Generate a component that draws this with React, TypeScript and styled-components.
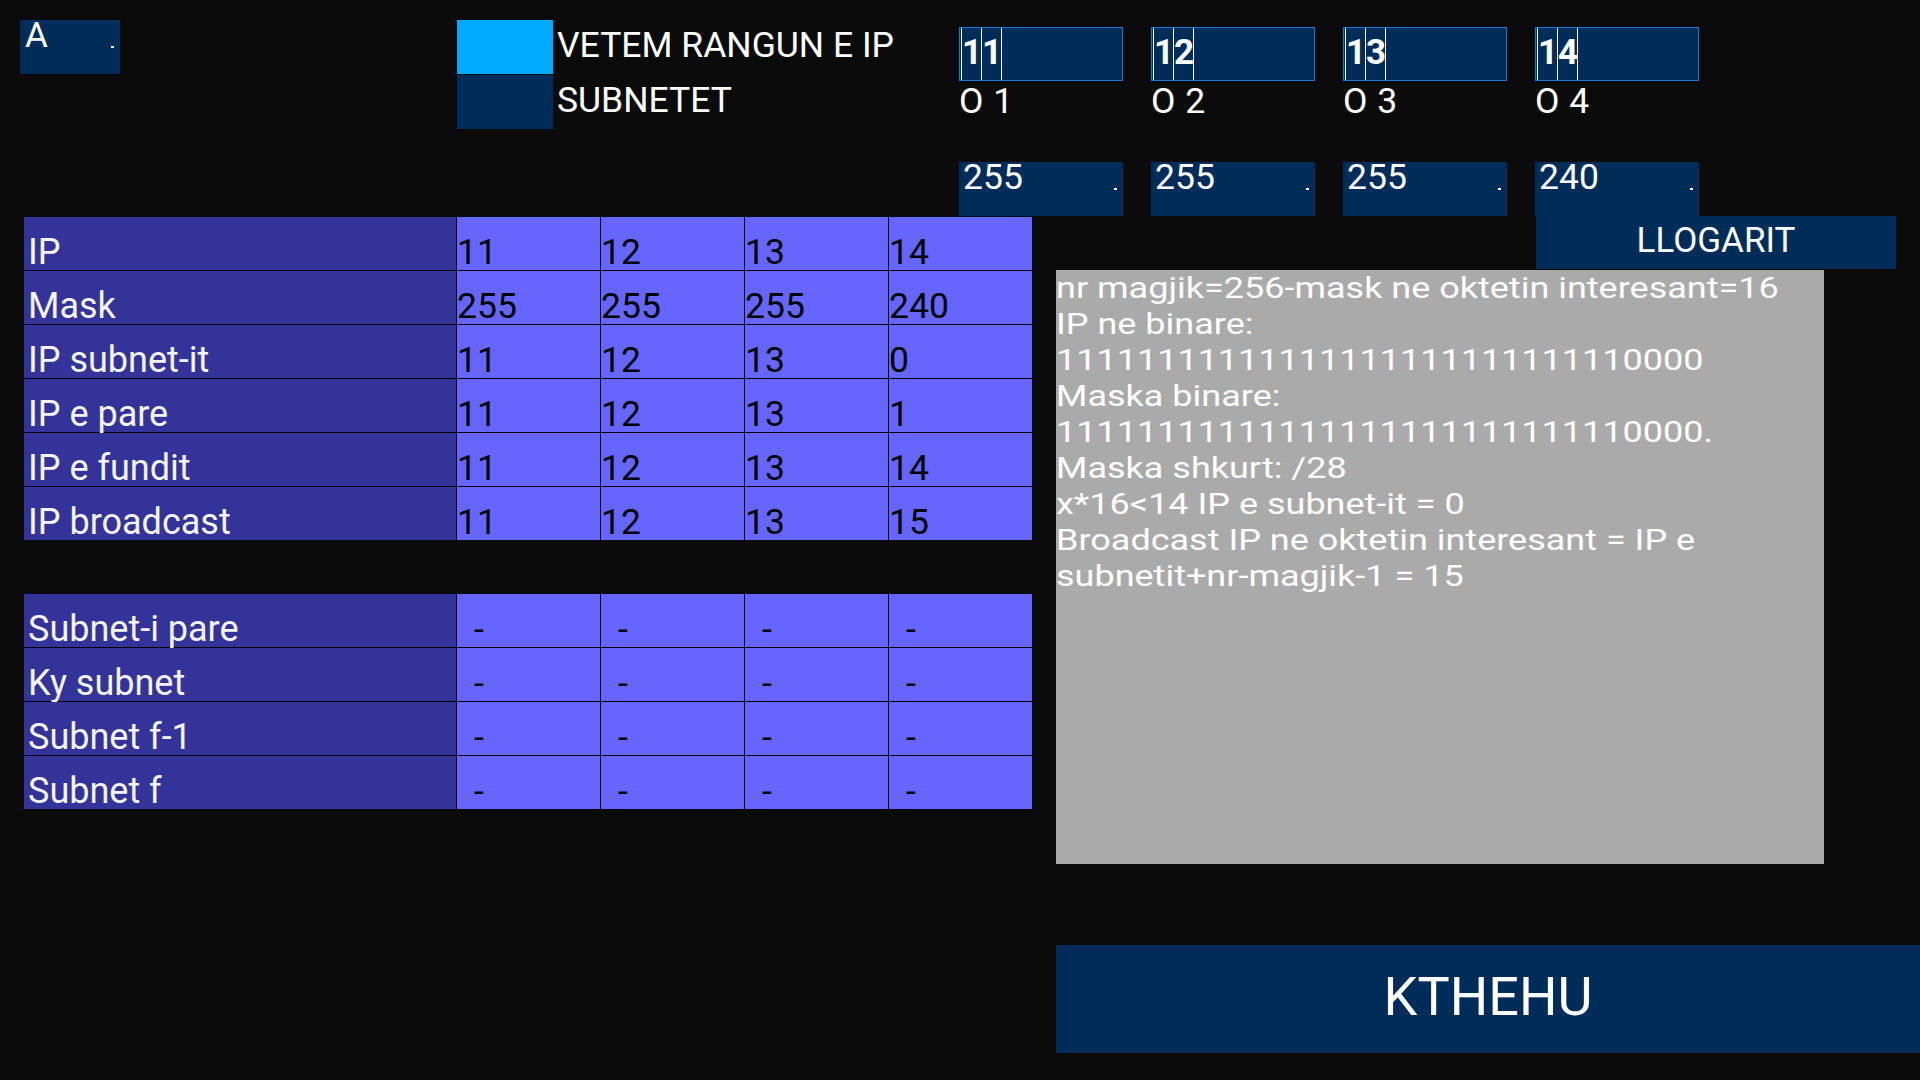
import React from 'react';
import styled, { createGlobalStyle } from 'styled-components';

const GlobalStyle = createGlobalStyle`
  html, body {
    margin: 0;
    padding: 0;
    background: #0c0b0c;
  }
  body {
    font-family: Roboto, "Noto Sans", sans-serif;
  }
`;

const NAVY = '#002c5a';

const octets = [
  { ip: '11', mask: '255', label: 'O 1' },
  { ip: '12', mask: '255', label: 'O 2' },
  { ip: '13', mask: '255', label: 'O 3' },
  { ip: '14', mask: '240', label: 'O 4' },
];

const ipRows = [
  ['IP', '11', '12', '13', '14'],
  ['Mask', '255', '255', '255', '240'],
  ['IP subnet-it', '11', '12', '13', '0'],
  ['IP e pare', '11', '12', '13', '1'],
  ['IP e fundit', '11', '12', '13', '14'],
  ['IP broadcast', '11', '12', '13', '15'],
];

const subnetRows = ['Subnet-i pare', 'Ky subnet', 'Subnet f-1', 'Subnet f'];

const outputLines = [
  'nr magjik=256-mask ne oktetin interesant=16',
  'IP ne binare: 11111111111111111111111111110000',
  'Maska binare: 11111111111111111111111111110000.',
  'Maska shkurt: /28',
  'x*16<14 IP e subnet-it = 0',
  'Broadcast IP ne oktetin interesant = IP e subnetit+nr-magjik-1 = 15',
];

export default function App() {
  return (
    <>
      <GlobalStyle />
      <Screen>
        <TopBar>
          <ABox>
            <span>A</span>
            <Dot />
          </ABox>
          <Legend>
            <LegendRow>
              <Swatch $color="#00aaff" />
              <LegendText>VETEM RANGUN E IP</LegendText>
            </LegendRow>
            <LegendRow>
              <Swatch $color={NAVY} />
              <LegendText>SUBNETET</LegendText>
            </LegendRow>
          </Legend>
          <Octets>
            {octets.map((o) => (
              <OctetColumn key={o.label}>
                <IpInput>
                  {o.ip.split('').map((d, i) => (
                    <Digit key={i}>{d}</Digit>
                  ))}
                </IpInput>
                <OctetLabel>{o.label}</OctetLabel>
                <MaskBox>
                  <span>{o.mask}</span>
                  <Dot />
                </MaskBox>
              </OctetColumn>
            ))}
          </Octets>
        </TopBar>

        <LeftColumn>
          <Table>
            {ipRows.map((row) => (
              <React.Fragment key={row[0]}>
                <LabelCell>{row[0]}</LabelCell>
                {row.slice(1).map((v, i) => (
                  <ValueCell key={i}>{v}</ValueCell>
                ))}
              </React.Fragment>
            ))}
          </Table>
          <Table>
            {subnetRows.map((label) => (
              <React.Fragment key={label}>
                <LabelCell>{label}</LabelCell>
                {[0, 1, 2, 3].map((i) => (
                  <ValueCell key={i} $empty>
                    -
                  </ValueCell>
                ))}
              </React.Fragment>
            ))}
          </Table>
        </LeftColumn>

        <RightColumn>
          <CalcButton>LLOGARIT</CalcButton>
          <Output>
            <OutputText>
              {outputLines.map((l) => (
                <div key={l}>{l}</div>
              ))}
            </OutputText>
          </Output>
          <BackButton>KTHEHU</BackButton>
        </RightColumn>
      </Screen>
    </>
  );
}

const Screen = styled.div`
  width: 1920px;
  height: 1080px;
  box-sizing: border-box;
  padding: 20px 0 0 20px;
  display: grid;
  grid-template-columns: 1036px 864px;
  grid-template-rows: 196px auto;
  align-content: start;
  overflow: hidden;
  color: #fff;
  font-family: Roboto, 'Noto Sans', sans-serif;
`;

const TopBar = styled.div`
  grid-column: 1 / -1;
  display: grid;
  grid-template-columns: 437px 502px auto;
  align-items: start;
`;

const ABox = styled.div`
  width: 100px;
  height: 54px;
  box-sizing: border-box;
  padding: 0 6px 0 5px;
  display: flex;
  justify-content: space-between;
  background: ${NAVY};
  font-size: 35px;
  line-height: 31px;
`;

const Dot = styled.span`
  width: 3px;
  height: 2px;
  margin-top: 26px;
  background: #fff;
`;

const Legend = styled.div`
  display: flex;
  flex-direction: column;
  gap: 1px;
`;

const LegendRow = styled.div`
  display: flex;
  gap: 4px;
`;

const Swatch = styled.div<{ $color: string }>`
  width: 96px;
  height: 54px;
  background: ${(p) => p.$color};
`;

const LegendText = styled.span`
  font-size: 35.5px;
  line-height: 50px;
  white-space: nowrap;
`;

const Octets = styled.div`
  display: flex;
  gap: 28px;
`;

const OctetColumn = styled.div`
  display: flex;
  flex-direction: column;
  width: 164px;
`;

const IpInput = styled.div`
  margin-top: 7px;
  height: 54px;
  box-sizing: border-box;
  padding-left: 1px;
  display: flex;
  border: 1px solid #1a77d2;
  background: ${NAVY};
  font-size: 35px;
  font-weight: 700;
  line-height: 41px;
`;

const Digit = styled.span`
  width: 19px;
  padding-top: 4px;
  border-left: 1px solid #fff;
  &:last-child {
    border-right: 1px solid #fff;
  }
`;

const OctetLabel = styled.span`
  font-size: 35.5px;
  line-height: 41px;
  word-spacing: 1px;
`;

const MaskBox = styled.div`
  margin-top: 40px;
  height: 54px;
  box-sizing: border-box;
  padding: 0 6px 0 4px;
  display: flex;
  justify-content: space-between;
  background: ${NAVY};
  font-size: 35.5px;
  line-height: 31px;
`;

const LeftColumn = styled.div`
  display: flex;
  flex-direction: column;
  gap: 54px;
  padding: 1px 0 0 4px;
`;

const Table = styled.div`
  width: 1008px;
  display: grid;
  grid-template-columns: 432px repeat(4, 143px);
  grid-auto-rows: 53px;
  gap: 1px;
  background: #000;
`;

const LabelCell = styled.div`
  display: flex;
  align-items: flex-end;
  padding-left: 4px;
  background: #333399;
  color: #f4f4f4;
  font-size: 36px;
  line-height: 35px;
  white-space: nowrap;
`;

const ValueCell = styled.div<{ $empty?: boolean }>`
  display: flex;
  align-items: flex-end;
  padding-left: ${(p) => (p.$empty ? '17px' : '0')};
  background: #6666ff;
  color: #000;
  font-size: 35.5px;
  line-height: 35px;
`;

const RightColumn = styled.div`
  display: flex;
  flex-direction: column;
  align-items: flex-start;
`;

const CalcButton = styled.button`
  margin-left: 480px;
  width: 360px;
  height: 53px;
  padding: 0 0 4px;
  border: none;
  background: ${NAVY};
  color: #fff;
  font-family: inherit;
  font-size: 35px;
  line-height: 41px;
`;

const Output = styled.div`
  margin-top: 1px;
  width: 768px;
  height: 594px;
  overflow: hidden;
  background: #aaaaaa;
  color: #fff;
`;

const OutputText = styled.div`
  width: 640px;
  transform: scaleX(1.2);
  transform-origin: left top;
  font-size: 30px;
  line-height: 36px;
`;

const BackButton = styled.button`
  margin-top: 81px;
  width: 864px;
  height: 108px;
  padding: 0 0 5px;
  border: none;
  background: ${NAVY};
  color: #fff;
  font-family: inherit;
  font-size: 54px;
`;
